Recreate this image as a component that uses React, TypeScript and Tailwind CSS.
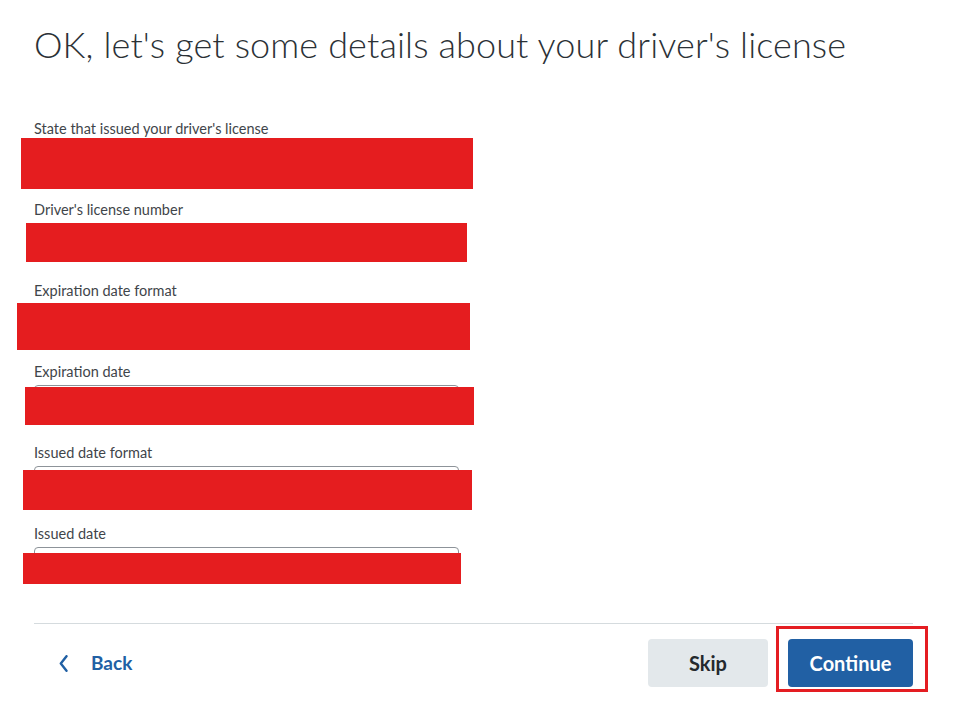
const fields = [
  { label: "State that issued your driver's license", mask: "left-[-14px] top-[-5px] w-[452px] h-[51px]" },
  { label: "Driver's license number", mask: "left-[-9px] top-[-1px] w-[441px] h-[39px]" },
  { label: "Expiration date format", mask: "left-[-18px] top-[-2px] w-[453px] h-[47px]" },
  { label: "Expiration date", mask: "left-[-10px] top-[1px] w-[449px] h-[38px]" },
  { label: "Issued date format", mask: "left-[-12px] top-[3px] w-[449px] h-[40px]" },
  { label: "Issued date", mask: "left-[-12px] top-[5px] w-[438px] h-[31px]" },
]

const Field = ({ label, mask }: { label: string; mask: string }) => (
  <div className="h-[81px]">
    <label className="block h-[20px] text-[14.5px] leading-[21px] text-[#3f454a]">{label}</label>
    <div className="relative mt-[4px] w-[425px] h-[36px] rounded-[4px] border border-[#8d9399] bg-white">
      <div className={"absolute bg-[#e51d1f] " + mask} />
    </div>
  </div>
)

const App = () => {
  return (
    <div className="min-h-[703px] w-[953px] bg-white pl-[34px] pt-[22px] font-['Lato','Open_Sans',sans-serif]">
      <h1 className="text-[36px] leading-[44px] font-light tracking-[0.12px] text-[#2b3136]">
        OK, let's get some details about your driver's license
      </h1>
      <form className="mt-[52px]">
        {fields.map((f) => (
          <Field key={f.label} label={f.label} mask={f.mask} />
        ))}
      </form>
      <div className="mt-[19px] w-[879px] border-t border-[#d5dbde]">
        <div className="flex items-center justify-between pt-[15px]">
          <button className="flex items-center gap-[23px] pl-[25px] text-[19px] font-bold text-[#2160a4]">
            <svg width="9" height="17" viewBox="0 0 9 17" fill="none">
              <path d="M7.5 1.2 L1.8 8.5 L7.5 15.8" stroke="#2160a4" strokeWidth="2.4" strokeLinecap="round" strokeLinejoin="round" />
            </svg>
            Back
          </button>
          <div className="flex gap-[20px]">
            <button className="h-[48px] w-[120px] rounded-[4px] bg-[#e3e8eb] text-[20px] font-bold text-[#24292e]">
              Skip
            </button>
            <div className="relative">
              <button className="h-[48px] w-[125px] rounded-[4px] bg-[#2160a4] text-[20px] font-bold text-white">
                Continue
              </button>
              <div className="pointer-events-none absolute left-[-12px] top-[-13px] h-[66px] w-[152px] border-[3px] border-[#e41d22]" />
            </div>
          </div>
        </div>
      </div>
    </div>
  )
}

export default App
